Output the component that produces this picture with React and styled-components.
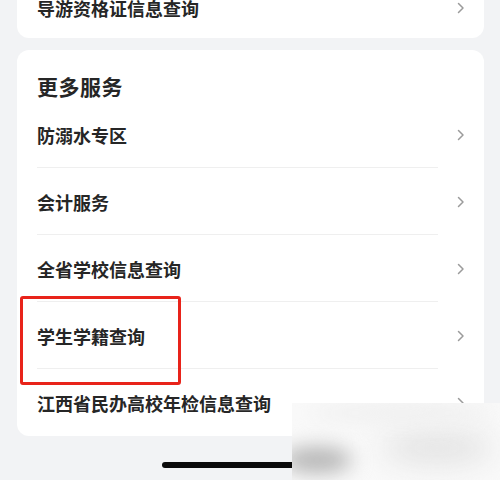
import React from "react";
import styled, { createGlobalStyle } from "styled-components";

const Global = createGlobalStyle`
  html, body { margin: 0; padding: 0; background: #f2f3f5; }
  body {
    font-family: "Noto Sans CJK SC", "Noto Sans", sans-serif;
    width: 500px; height: 480px; overflow: hidden;
  }
`;

const Page = styled.div`
  position: relative;
  width: 500px;
  height: 480px;
  overflow: hidden;
  background: #f2f3f5;
  display: flex;
  flex-direction: column;
  gap: 12px;
`;

const Card = styled.div`
  position: relative;
  margin: ${(p) => p.$top || 0}px 16px 0 17px;
  background: #ffffff;
  border-radius: 12px;
`;

const SectionTitle = styled.div`
  padding: 24px 20px 3px;
  height: 24px;
  line-height: 24px;
  font-size: 21px;
  font-weight: 600;
  color: #262626;
  letter-spacing: 0.5px;
`;

const Row = styled.div`
  display: flex;
  align-items: center;
  justify-content: space-between;
  height: ${(p) => p.$h || 67}px;
  padding: 0 19px 0 20px;
  font-size: 18px;
  color: #262626;
  font-weight: 600;
  background: ${(p) =>
    p.$divider
      ? "linear-gradient(#efefef, #efefef) no-repeat 20px 100% / calc(100% - 66px) 1px"
      : "none"};
`;

const Label = styled.span`
  line-height: 24px;
`;

const Chevron = () => (
  <svg width="8" height="12" viewBox="0 0 8 12">
    <polyline
      points="1.5,1.5 6,6 1.5,10.5"
      fill="none"
      stroke="#9b9b9b"
      strokeWidth="1.5"
      strokeLinecap="round"
      strokeLinejoin="round"
    />
  </svg>
);

const Highlight = styled.div`
  position: absolute;
  left: 3px;
  top: 246px;
  width: 155px;
  height: 83px;
  border: 3.5px solid #e8231a;
  border-radius: 3px;
  pointer-events: none;
`;

const HomeBar = styled.div`
  position: absolute;
  left: 162px;
  top: 462px;
  width: 176px;
  height: 6px;
  border-radius: 3px;
  background: #0a0a0a;
`;

const Smudge = styled.div`
  position: absolute;
  left: 292px;
  top: 403px;
  width: 208px;
  height: 77px;
  overflow: hidden;
  background: #f9f9f9;
`;

const Blob = styled.div`
  position: absolute;
  border-radius: 50%;
  filter: blur(${(p) => p.$blur}px);
  background: ${(p) => p.$color};
`;

const services = [
  "防溺水专区",
  "会计服务",
  "全省学校信息查询",
  "学生学籍查询",
  "江西省民办高校年检信息查询",
];

export default function App() {
  return (
    <>
      <Global />
      <Page>
        <Card $top={-22}>
          <Row $h={60}>
            <Label>导游资格证信息查询</Label>
            <Chevron />
          </Row>
        </Card>
        <Card>
          <SectionTitle>更多服务</SectionTitle>
          {services.map((s, i) => (
            <Row key={s} $divider={i < services.length - 1}>
              <Label>{s}</Label>
              <Chevron />
            </Row>
          ))}
          <Highlight />
        </Card>
        <HomeBar />
        <Smudge>
          <Blob
            $blur={10}
            $color="#b4b4b4"
            style={{ left: -10, top: 44, width: 70, height: 26 }}
          />
          <Blob
            $blur={14}
            $color="#e4e4e4"
            style={{ left: 90, top: 28, width: 110, height: 34 }}
          />
          <Blob
            $blur={10}
            $color="#efefef"
            style={{ left: 20, top: 0, width: 180, height: 20 }}
          />
        </Smudge>
      </Page>
    </>
  );
}
